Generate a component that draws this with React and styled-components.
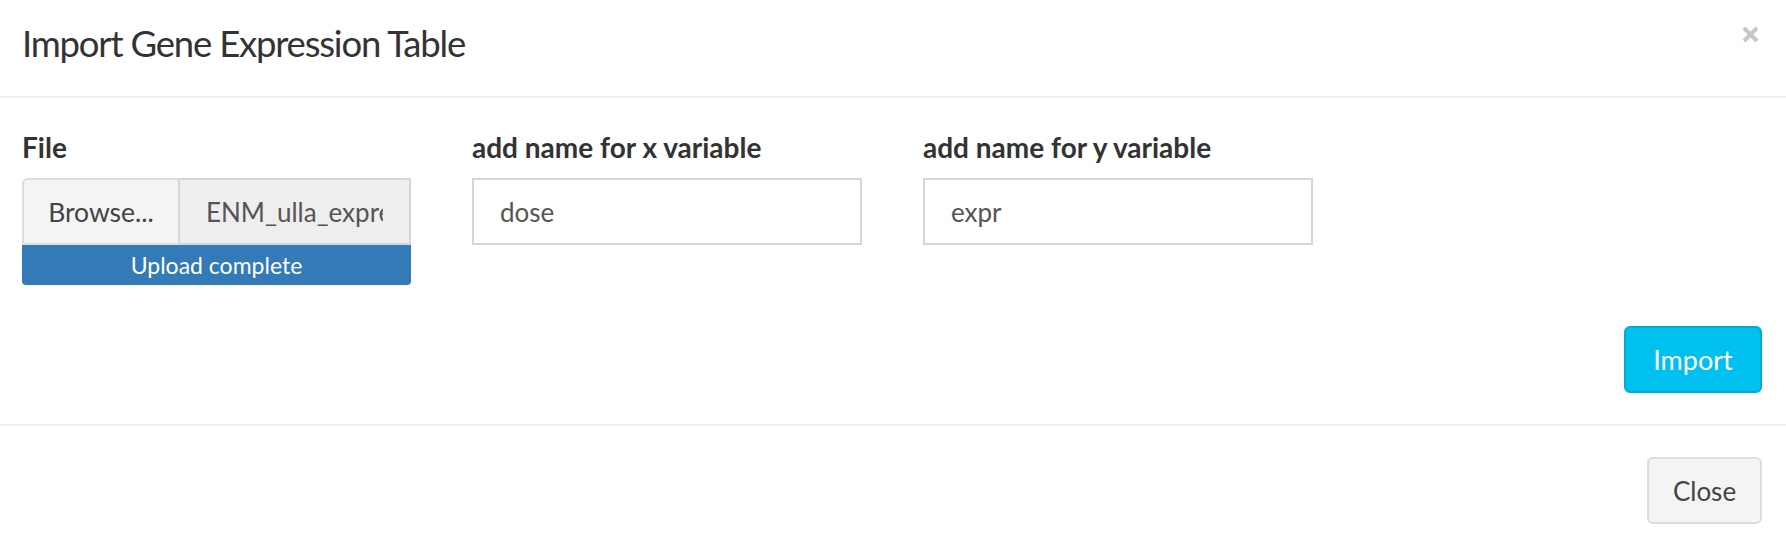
import React from "react";
import styled, { createGlobalStyle } from "styled-components";

const Global = createGlobalStyle`
  html, body { margin: 0; padding: 0; background: #fff; }
  body { font-family: Lato, "Liberation Sans", sans-serif; color: #333; }
  * { box-sizing: border-box; }
`;

const Modal = styled.div`
  width: 1786px;
  background: #fff;
`;

const Header = styled.div`
  height: 98px;
  padding: 0 27px 0 22px;
  display: flex;
  align-items: center;
  justify-content: space-between;
  border-bottom: 2px solid #f2f2f2;
`;

const Title = styled.h4`
  margin: 0 0 8px;
  font-size: 36.5px;
  letter-spacing: -1.2px;
  font-weight: 400;
  line-height: 1.2;
  color: #333;
`;

const CloseX = styled.button`
  border: 0;
  background: none;
  padding: 0;
  margin-top: -28px;
  width: 17px;
  height: 17px;
  display: flex;
  cursor: pointer;
`;

const Body = styled.div`
  padding: 31px 24px 31px 22px;
  border-bottom: 2px solid #f2f2f2;
`;

const Row = styled.div`
  display: flex;
  gap: 61px;
  align-items: flex-start;
`;

const Field = styled.div`
  width: ${(p) => p.$w || 390}px;
  display: flex;
  flex-direction: column;
`;

const Label = styled.label`
  font-size: 28px;
  font-weight: 700;
  line-height: 37px;
  margin-bottom: 12px;
  color: #333;
`;

const TextInput = styled.input`
  height: 67px;
  width: 100%;
  border: 2px solid #d2d6de;
  border-radius: 0;
  padding: 0 26px;
  font-family: Lato, "Liberation Sans", sans-serif;
  font-size: 26px;
  color: #555;
  background: ${(p) => (p.readOnly ? "#eeeeee" : "#fff")};
  outline: none;
`;

const Group = styled.div`
  display: flex;
  height: 67px;
`;

const BrowseBtn = styled.span`
  flex: 0 0 158px;
  display: flex;
  align-items: center;
  justify-content: center;
  background: #f4f4f4;
  border: 2px solid #dddddd;
  border-right-color: #d2d6de;
  border-radius: 6px 0 0 0;
  font-size: 26.5px;
  color: #444;
`;

const FileName = styled(TextInput)`
  flex: 1;
  min-width: 0;
  border-left: 0;
`;

const Progress = styled.div`
  height: 40px;
  background: #337ab7;
  color: #fff;
  border-radius: 0 0 4px 4px;
  display: flex;
  align-items: center;
  justify-content: center;
  font-size: 23px;
`;

const Actions = styled.div`
  display: flex;
  justify-content: flex-end;
  margin-top: ${(p) => p.$top || 0}px;
`;

const Btn = styled.button`
  width: ${(p) => p.$w}px;
  height: 67px;
  border-radius: 6px;
  font-family: Lato, "Liberation Sans", sans-serif;
  font-size: ${(p) => (p.$primary ? 27 : 26)}px;
  cursor: pointer;
  background: ${(p) => (p.$primary ? "#00c0ef" : "#f4f4f4")};
  border: 2px solid ${(p) => (p.$primary ? "#00acd6" : "#dddddd")};
  color: ${(p) => (p.$primary ? "#fff" : "#444")};
  padding: 0;
`;

const Footer = styled.div`
  padding: 31px 24px 17px;
  display: flex;
  justify-content: flex-end;
`;

export default function App() {
  return (
    <Modal>
      <Global />
      <Header>
        <Title>Import Gene Expression Table</Title>
        <CloseX aria-label="Close">
          <svg width="17" height="17" viewBox="0 0 17 17">
            <path d="M2 2L15 15M15 2L2 15" stroke="#c6c6c6" strokeWidth="4" strokeLinecap="butt" />
          </svg>
        </CloseX>
      </Header>
      <Body>
        <Row>
          <Field $w={389}>
            <Label>File</Label>
            <Group>
              <BrowseBtn>Browse...</BrowseBtn>
              <FileName readOnly value="ENM_ulla_expression.csv" />
            </Group>
            <Progress>Upload complete</Progress>
          </Field>
          <Field>
            <Label>add name for x variable</Label>
            <TextInput defaultValue="dose" />
          </Field>
          <Field>
            <Label>add name for y variable</Label>
            <TextInput defaultValue="expr" />
          </Field>
        </Row>
        <Actions $top={41}>
          <Btn $primary $w={138}>Import</Btn>
        </Actions>
      </Body>
      <Footer>
        <Btn $w={115}>Close</Btn>
      </Footer>
    </Modal>
  );
}
